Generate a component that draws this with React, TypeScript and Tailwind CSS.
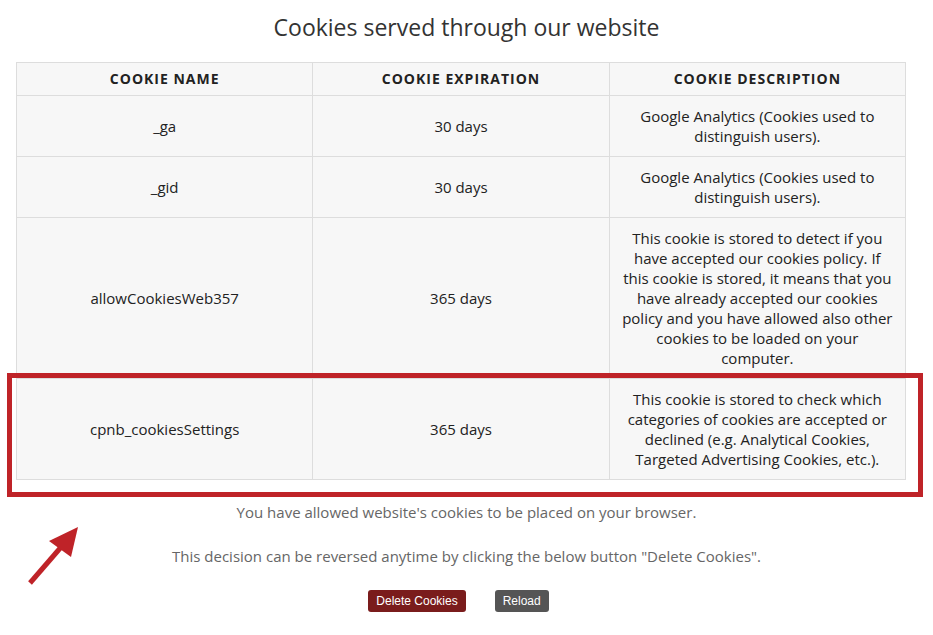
const rows = [
  { name: '_ga', exp: '30 days', desc: 'Google Analytics (Cookies used to distinguish users).' },
  { name: '_gid', exp: '30 days', desc: 'Google Analytics (Cookies used to distinguish users).' },
  {
    name: 'allowCookiesWeb357',
    exp: '365 days',
    desc: 'This cookie is stored to detect if you have accepted our cookies policy. If this cookie is stored, it means that you have already accepted our cookies policy and you have allowed also other cookies to be loaded on your computer.',
  },
  {
    name: 'cpnb_cookiesSettings',
    exp: '365 days',
    desc: 'This cookie is stored to check which categories of cookies are accepted or declined (e.g. Analytical Cookies, Targeted Advertising Cookies, etc.).',
  },
];

export default function App() {
  return (
    <div
      className="relative w-[933px] h-[635px] bg-white text-[#222] overflow-hidden"
      style={{ fontFamily: '"Open Sans", "Noto Sans", sans-serif' }}
    >
      <h1 className="text-center text-[23px] leading-[32px] pt-[11px] text-[#333]">
        Cookies served through our website
      </h1>

      <table className="ml-[16px] mt-[19px] w-[890px] border-collapse bg-[#f7f7f7] text-[15px] leading-[20px] text-center table-fixed">
        <thead>
          <tr>
            <th className="border border-[#ddd] h-[33px] p-0 font-bold uppercase tracking-[1px] text-[14px]">Cookie Name</th>
            <th className="border border-[#ddd] h-[33px] p-0 font-bold uppercase tracking-[1px] text-[14px]">Cookie Expiration</th>
            <th className="border border-[#ddd] h-[33px] p-0 font-bold uppercase tracking-[1px] text-[14px]">Cookie Description</th>
          </tr>
        </thead>
        <tbody>
          {rows.map((r) => (
            <tr key={r.name}>
              <td className="border border-[#ddd] px-[10px] py-[10px]">{r.name}</td>
              <td className="border border-[#ddd] px-[10px] py-[10px]">{r.exp}</td>
              <td className="border border-[#ddd] px-[10px] py-[10px]">{r.desc}</td>
            </tr>
          ))}
        </tbody>
      </table>

      <p className="text-center text-[15px] leading-[20px] text-[#666] mt-[22px]">
        You have allowed website's cookies to be placed on your browser.
      </p>
      <p className="text-center text-[15px] leading-[20px] text-[#666] mt-[24px]">
        This decision can be reversed anytime by clicking the below button "Delete Cookies".
      </p>

      <div className="flex justify-center gap-[29px] mt-[24px] pr-[16px]" style={{ fontFamily: '"Liberation Sans", Arial, sans-serif' }}>
        <button className="bg-[#7a1c1c] text-white text-[12px] leading-[22px] h-[22px] px-[8px] rounded-[3px]">
          Delete Cookies
        </button>
        <button className="bg-[#555] text-white text-[12px] leading-[22px] h-[22px] px-[8px] rounded-[3px]">
          Reload
        </button>
      </div>

      {/* annotation overlay */}
      <div className="absolute left-[7px] top-[373px] w-[916px] h-[124px] border-[5px] border-[#bf2328] pointer-events-none" />
      <svg className="absolute left-0 top-0 pointer-events-none" width="933" height="635">
        <line x1="30" y1="583" x2="62" y2="546" stroke="#bf2328" strokeWidth="5" />
        <polygon points="78,527 49,541 71,557" fill="#bf2328" />
      </svg>
    </div>
  );
}
